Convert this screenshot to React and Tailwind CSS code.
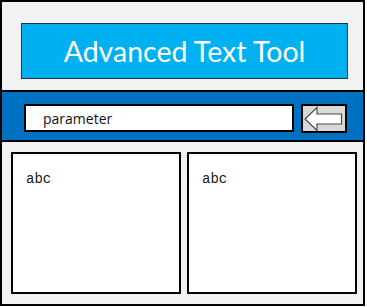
import React from "react";

// 뒤로가기 화살표 (블록 화살표 윤곽)
function ArrowIcon() {
  return (
    <svg width="42" height="25" viewBox="0 0 42 25">
      <polygon
        points="2,13 14,1.5 14,8 38.5,8 38.5,18 14,18 14,24.5"
        fill="#ffffff"
        stroke="#4d4d4d"
        strokeWidth="1.2"
        strokeLinejoin="miter"
      />
    </svg>
  );
}

export default function App() {
  return (
    <div className="w-[365px] h-[306px] border-2 border-black bg-[#f2f2f2] flex flex-col font-['Lato','Open_Sans',sans-serif]">
      {/* 타이틀 */}
      <div className="h-[88px] pl-[19px] pt-[21px]">
        <div className="w-[327px] h-[56px] bg-[#00b0f0] border border-[#1c3552] flex items-center justify-center">
          <span className="text-white text-[28.5px] leading-none">Advanced Text Tool</span>
        </div>
      </div>

      {/* 파라미터 입력 바 */}
      <div className="h-[52px] bg-[#0070c0] border-y-2 border-black flex items-start pt-[12px] pl-[22px] gap-[7px]">
        <div className="w-[270px] h-[28px] bg-white border-2 border-black flex items-center pl-[17px]">
          <span className="text-[14px] text-[#111] font-['Open_Sans',sans-serif]">parameter</span>
        </div>
        <div className="w-[46px] h-[29px] bg-[#d9d9d9] border-2 border-black flex items-center justify-center">
          <ArrowIcon />
        </div>
      </div>

      {/* 결과 패널 */}
      <div className="flex-1 flex gap-[6px] pl-[9px] pt-[10px]">
        <div className="w-[170px] h-[142px] bg-white border-2 border-black pl-[13px] pt-[11px]">
          <span className="text-[14px] leading-[16px] text-[#1a1a1a] font-['Liberation_Mono',monospace]">abc</span>
        </div>
        <div className="w-[170px] h-[142px] bg-white border-2 border-black pl-[13px] pt-[11px]">
          <span className="text-[14px] leading-[16px] text-[#1a1a1a] font-['Liberation_Mono',monospace]">abc</span>
        </div>
      </div>
    </div>
  );
}
